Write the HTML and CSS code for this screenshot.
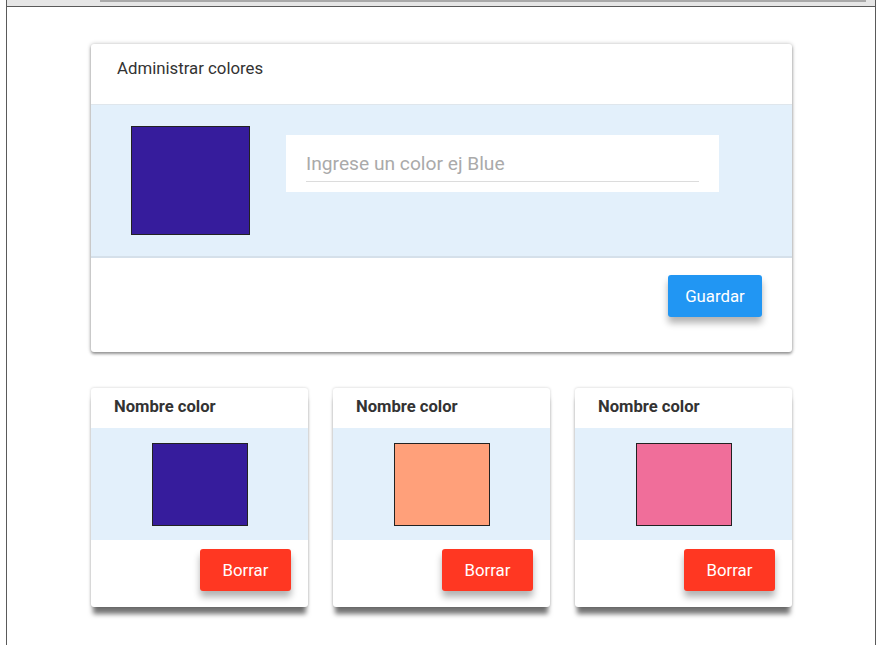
FILE: index.html
```html
<!DOCTYPE html>
<html lang="es">
<head>
<meta charset="utf-8">
<title>Administrar colores</title>
<link rel="stylesheet" href="styles.css">
</head>
<body>
<div class="frame">
  <div class="topbar"><div class="topline"></div></div>
  <main class="content">
    <section class="card main-card">
      <header class="main-head">Administrar colores</header>
      <div class="main-body">
        <div class="swatch big" style="background:#361c9c"></div>
        <div class="field">
          <input class="field-input" type="text" placeholder="Ingrese un color ej Blue">
        </div>
      </div>
      <footer class="main-foot">
        <button class="btn btn-blue">Guardar</button>
      </footer>
    </section>

    <div class="grid">
      <section class="card color-card">
        <header class="cc-head">Nombre color</header>
        <div class="cc-body"><div class="swatch small" style="background:#361c9c"></div></div>
        <footer class="cc-foot"><button class="btn btn-red">Borrar</button></footer>
      </section>
      <section class="card color-card">
        <header class="cc-head">Nombre color</header>
        <div class="cc-body"><div class="swatch small" style="background:#ffa07a"></div></div>
        <footer class="cc-foot"><button class="btn btn-red">Borrar</button></footer>
      </section>
      <section class="card color-card">
        <header class="cc-head">Nombre color</header>
        <div class="cc-body"><div class="swatch small" style="background:#f06e9a"></div></div>
        <footer class="cc-foot"><button class="btn btn-red">Borrar</button></footer>
      </section>
    </div>
  </main>
</div>
</body>
</html>
```
FILE: styles.css
```css
* { box-sizing: border-box; }
html, body { margin: 0; padding: 0; background: #fff; }
body { font-family: Roboto, "Liberation Sans", Arial, sans-serif; color: #333; }

.frame {
  margin-left: 6px;
  width: 870px;
  height: 645px;
  border-left: 1px solid #5a5a5a;
  border-right: 1px solid #5a5a5a;
  overflow: hidden;
}
.topbar {
  height: 7px;
  background: #e6e6e6;
  border-bottom: 1px solid #5a5a5a;
  padding-left: 93px;
  padding-right: 9px;
}
.topline { height: 2px; background: #a9a9a9; }

.content { padding: 37px 0 0 84px; }

.card { background: #fff; border-radius: 3px; }

.main-card {
  width: 701px;
  box-shadow: 0 0 4px rgba(0,0,0,.25), 0 2px 3px rgba(0,0,0,.35);
}
.main-head {
  height: 61px;
  padding: 15px 26px 0;
  font-size: 16.8px;
  line-height: 18px;
  border-bottom: 1px solid #dfe6ec;
}
.main-body {
  background: #e3f0fb;
  height: 153px;
  display: flex;
  align-items: flex-start;
  padding: 21px 0 0 40px;
  border-bottom: 2px solid #d5e0ea;
}
.swatch { border: 1px solid #222; }
.swatch.big { width: 119px; height: 109px; flex: none; }
.field {
  margin: 9px 0 0 36px;
  width: 433px;
  height: 57px;
  background: #fff;
  padding: 11px 20px 0;
}
.field-input {
  width: 100%;
  border: 0;
  border-bottom: 1px solid #dcdcdc;
  outline: none;
  font-family: inherit;
  font-size: 19.2px;
  height: 36px;
  padding: 0;
  color: #333;
  background: transparent;
}
.field-input::placeholder { color: #aaa; }

.main-foot {
  height: 94px;
  display: flex;
  justify-content: flex-end;
  align-items: flex-start;
  padding: 17px 30px 0 0;
}

.btn {
  border: 0;
  border-radius: 3px;
  color: #fff;
  font-family: inherit;
  font-size: 16.8px;
  height: 42px;
  cursor: pointer;
  box-shadow: 0 6px 7px rgba(0,0,0,.3);
}
.btn-blue { background: #2196f3; width: 94px; }
.btn-red { background: #ff3722; width: 91px; }

.grid {
  display: flex;
  gap: 25px;
  margin-top: 36px;
  width: 701px;
}
.color-card {
  width: 217px;
  box-shadow: 0 0 3px rgba(0,0,0,.2), 0 9px 5px -2px rgba(0,0,0,.55);
}
.cc-head {
  height: 40px;
  padding: 10px 23px 0;
  font-size: 16.6px;
  font-weight: 700;
  line-height: 18px;
  color: #333;
}
.cc-body {
  background: #e3f0fb;
  height: 112px;
  display: flex;
  justify-content: center;
  padding-top: 15px;
}
.swatch.small { width: 96px; height: 83px; }
.cc-foot {
  height: 67px;
  display: flex;
  justify-content: flex-end;
  align-items: flex-start;
  padding: 9px 17px 0 0;
}
```
